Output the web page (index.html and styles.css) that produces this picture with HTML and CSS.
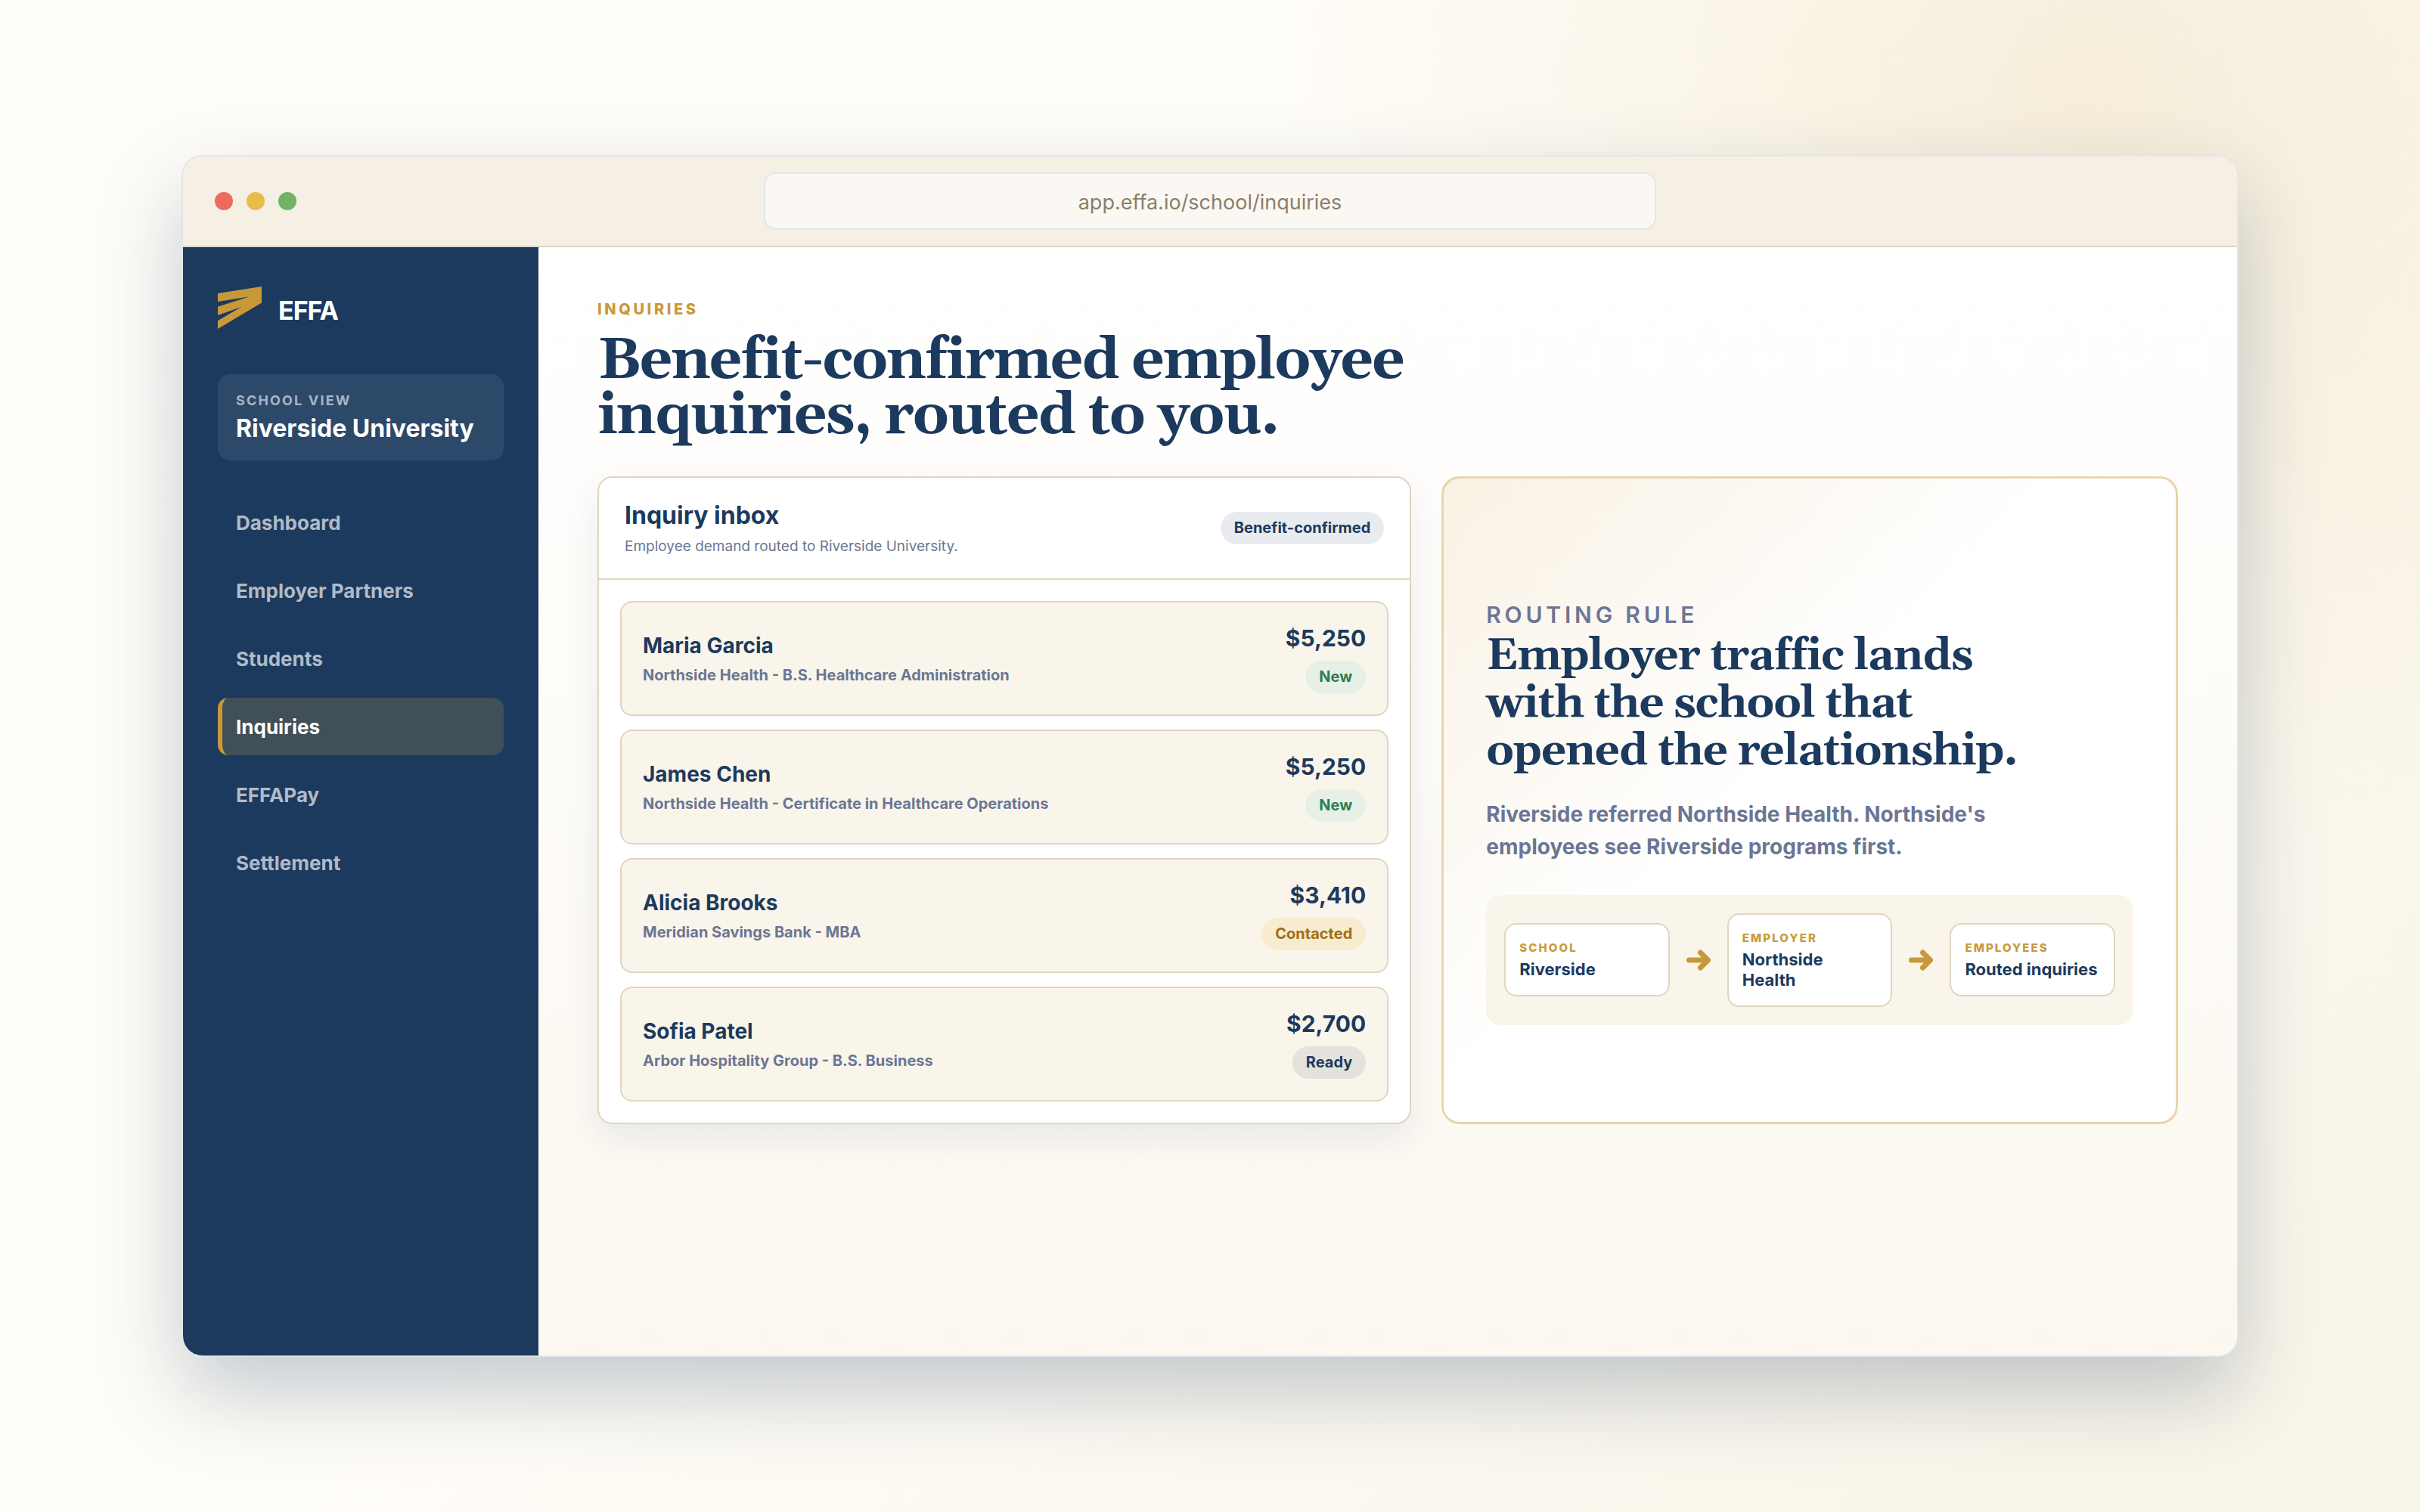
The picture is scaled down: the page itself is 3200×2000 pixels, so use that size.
FILE: index.html
```
<!DOCTYPE html>
<html lang="en">
<head>
<meta charset="utf-8">
<title>EFFA – Inquiries</title>
<link rel="stylesheet" href="styles.css">
</head>
<body>
<div class="window">
  <header class="titlebar">
    <div class="lights"><span class="light light-red"></span><span class="light light-yellow"></span><span class="light light-green"></span></div>
    <input class="address" type="text" aria-label="Address" value="app.effa.io/school/inquiries" readonly>
  </header>
  <div class="app">
    <aside class="sidebar">
      <div class="brand">
        <svg class="brand-mark" viewBox="0 0 58 56" aria-hidden="true"><path d="M0 9L58 0V21.600L0 56V45.300L31 27L0 38V26.700L42 13.300L0 20Z"/></svg>
        <span class="brand-name">EFFA</span>
      </div>
      <div class="account">
        <span class="account-label">SCHOOL VIEW</span>
        <strong class="account-name">Riverside University</strong>
      </div>
      <nav class="nav">
        <a class="nav-item" href="#">Dashboard</a>
        <a class="nav-item" href="#">Employer Partners</a>
        <a class="nav-item" href="#">Students</a>
        <a class="nav-item active" href="#" aria-current="page">Inquiries</a>
        <a class="nav-item" href="#">EFFAPay</a>
        <a class="nav-item" href="#">Settlement</a>
      </nav>
    </aside>
    <main class="main">
      <p class="eyebrow">INQUIRIES</p>
      <h1 class="title">Benefit-confirmed employee<br>inquiries, routed to you.</h1>
      <div class="columns">
        <section class="inbox">
          <header class="inbox-head">
            <div>
              <h2 class="inbox-title">Inquiry inbox</h2>
              <p class="inbox-sub">Employee demand routed to Riverside University.</p>
            </div>
            <span class="pill pill-navy">Benefit-confirmed</span>
          </header>
          <ul class="rows">
            <li class="row">
              <div><h3 class="name">Maria Garcia</h3><p class="detail">Northside Health - B.S. Healthcare Administration</p></div>
              <div class="status"><span class="amount">$5,250</span><span class="pill pill-green">New</span></div>
            </li>
            <li class="row">
              <div><h3 class="name">James Chen</h3><p class="detail">Northside Health - Certificate in Healthcare Operations</p></div>
              <div class="status"><span class="amount">$5,250</span><span class="pill pill-green">New</span></div>
            </li>
            <li class="row">
              <div><h3 class="name">Alicia Brooks</h3><p class="detail">Meridian Savings Bank - MBA</p></div>
              <div class="status"><span class="amount">$3,410</span><span class="pill pill-gold">Contacted</span></div>
            </li>
            <li class="row">
              <div><h3 class="name">Sofia Patel</h3><p class="detail">Arbor Hospitality Group - B.S. Business</p></div>
              <div class="status"><span class="amount">$2,700</span><span class="pill pill-navy">Ready</span></div>
            </li>
          </ul>
        </section>
        <section class="rule">
          <p class="rule-label">ROUTING RULE</p>
          <h2 class="rule-title">Employer traffic lands<br>with the school that<br>opened the relationship.</h2>
          <p class="rule-text">Riverside referred Northside Health. Northside's<br>employees see Riverside programs first.</p>
          <div class="flow">
            <div class="step"><span class="step-label">SCHOOL</span><strong class="step-name">Riverside</strong></div>
            <svg class="arrow" viewBox="0 0 32 28" aria-hidden="true"><path d="M3.500 14H28M18.500 4L28.500 14L18.500 24"/></svg>
            <div class="step"><span class="step-label">EMPLOYER</span><strong class="step-name">Northside Health</strong></div>
            <svg class="arrow" viewBox="0 0 32 28" aria-hidden="true"><path d="M3.500 14H28M18.500 4L28.500 14L18.500 24"/></svg>
            <div class="step"><span class="step-label">EMPLOYEES</span><strong class="step-name">Routed inquiries</strong></div>
          </div>
        </section>
      </div>
    </main>
  </div>
</div>
</body>
</html>
```
FILE: styles.css
```
:root {
  --navy: #1c3a5e;
  --gold: #c8993a;
  --slate: #6b7694;
  --line: #e0d5c1;
  --cream: #faf5ea;
}

* { box-sizing: border-box; }

body {
  margin: 0;
  min-height: 100vh;
  display: flex;
  align-items: center;
  justify-content: center;
  font-family: Inter, "Liberation Sans", sans-serif;
  color: var(--navy);
  background:
    radial-gradient(circle at 86% 6%, rgba(200, 153, 58, 0.14), transparent 32%),
    linear-gradient(135deg, #fffdf9 0%, #fffdf8 45%, #faf5ea 90%);
}

h1, h2, h3, p, ul { margin: 0; padding: 0; }

.window {
  width: 85%;
  min-height: 79.5vh;
  display: flex;
  flex-direction: column;
  overflow: hidden;
  border: 2px solid #e2e6eb;
  border-radius: 28px;
  background: #fff;
  box-shadow: 0 48px 112px rgba(28, 58, 94, 0.26);
}

.titlebar {
  height: 120px;
  display: grid;
  grid-template-columns: 1fr 1180px 1fr;
  align-items: center;
  padding: 0 42px;
  border-bottom: 2px solid var(--line);
  background: #f6efe4;
}

.lights { display: flex; gap: 18px; }
.light { width: 24px; height: 24px; border-radius: 50%; }
.light-red { background: #ee695e; }
.light-yellow { background: #e7bc49; }
.light-green { background: #72b366; }

.address {
  height: 76px;
  padding: 2px 0 0;
  border: 2px solid #e2e6e9;
  border-radius: 16px;
  background: #fbf8f3;
  color: #8a7f6a;
  font: 400 27px/36px Inter, "Liberation Sans", sans-serif;
  text-align: center;
}

.app { flex: 1; display: flex; }

.sidebar {
  width: 470px;
  flex: none;
  padding: 52px 46px;
  background: var(--navy);
  color: #fff;
}

.brand { display: flex; align-items: center; gap: 22px; height: 64px; margin-bottom: 52px; }
.brand-mark { width: 58px; height: 56px; align-self: flex-start; fill: var(--gold); }
.brand-name { font-size: 34px; line-height: 40px; font-weight: 700; letter-spacing: -0.03em; }

.account {
  display: flex;
  flex-direction: column;
  gap: 4px;
  padding: 24px 24px 20px;
  border-radius: 16px;
  background: rgba(255, 255, 255, 0.08);
}
.account-label { font-size: 18px; line-height: 22px; font-weight: 700; letter-spacing: 0.12em; color: rgba(255, 255, 255, 0.6); }
.account-name { font-size: 32px; line-height: 44px; font-weight: 700; white-space: nowrap; }

.nav { display: flex; flex-direction: column; gap: 14px; margin-top: 44px; }
.nav-item {
  padding: 21px 18px 19px;
  border-left: 6px solid transparent;
  border-radius: 14px;
  font-size: 26px;
  line-height: 36px;
  font-weight: 700;
  color: rgba(255, 255, 255, 0.66);
  text-decoration: none;
}
.nav-item.active { border-left-color: var(--gold); background: rgba(200, 153, 58, 0.22); color: #fff; }

.main {
  flex: 1;
  padding: 68px 78px;
  background: linear-gradient(180deg, #fff 0%, #fcf8f0 100%);
}

.eyebrow { font-size: 20px; line-height: 28px; font-weight: 800; letter-spacing: 0.18em; color: var(--gold); }

.title, .rule-title { font-family: Georgia, Gelasio, "Liberation Serif", serif; font-weight: 700; }
.title { margin-top: 18px; font-size: 76px; line-height: 73px; letter-spacing: -0.025em; }

.columns { display: grid; grid-template-columns: 1.05fr 0.95fr; gap: 40px; margin-top: 43px; }

.inbox {
  border: 2px solid var(--line);
  border-radius: 20px;
  background: #fff;
  box-shadow: 0 20px 48px rgba(28, 58, 94, 0.09);
}
.inbox-head {
  display: flex;
  align-items: center;
  justify-content: space-between;
  padding: 28px 34px;
  border-bottom: 2px solid var(--line);
}
.inbox-title { font-size: 32px; line-height: 44px; font-weight: 700; }
.inbox-sub { margin-top: 5px; font-size: 19px; line-height: 28px; color: var(--slate); }

.pill { padding: 8px 18px; border-radius: 22px; font-size: 20px; line-height: 27px; font-weight: 700; }
.pill-navy { background: rgba(28, 58, 94, 0.1); }
.pill-green { background: #e6f0e7; color: #2f7d4f; }
.pill-gold { background: #f7ebd0; color: #a06f14; }

.rows { display: flex; flex-direction: column; gap: 18px; padding: 28px; list-style: none; }
.row {
  min-height: 152px;
  display: flex;
  align-items: center;
  justify-content: space-between;
  padding: 24px 28px;
  border: 2px solid var(--line);
  border-radius: 16px;
  background: var(--cream);
}
.name { font-size: 28px; line-height: 36px; font-weight: 700; }
.detail { margin-top: 7px; font-size: 20px; line-height: 28px; font-weight: 700; color: var(--slate); }
.status { display: flex; flex-direction: column; align-items: flex-end; gap: 11px; }
.amount { font-size: 30px; line-height: 38px; font-weight: 700; }

.rule {
  display: flex;
  flex-direction: column;
  justify-content: center;
  padding: 56px;
  border: 3px solid #e8d5ab;
  border-radius: 24px;
  background: linear-gradient(135deg, #f9f1e3 0%, #fff 45%);
}
.rule-label { padding-top: 28px; font-size: 30px; line-height: 47px; font-weight: 600; letter-spacing: 0.16em; color: var(--slate); }
.rule-title { font-size: 58px; line-height: 63px; letter-spacing: -0.02em; }
.rule-text { margin-top: 30px; font-size: 28px; line-height: 43px; font-weight: 700; color: var(--slate); }

.flow {
  display: grid;
  grid-template-columns: 1fr 32px 1fr 32px 1fr;
  align-items: center;
  gap: 22px;
  margin-top: 42px;
  padding: 24px;
  border-radius: 20px;
  background: var(--cream);
}
.step {
  display: flex;
  flex-direction: column;
  gap: 4px;
  padding: 20px 18px;
  border: 2px solid var(--line);
  border-radius: 16px;
  background: #fff;
}
.step-label { font-size: 15px; line-height: 22px; font-weight: 800; letter-spacing: 0.14em; color: var(--gold); }
.step-name { font-size: 22px; line-height: 27px; font-weight: 700; }
.arrow { width: 32px; height: 28px; fill: none; stroke: var(--gold); stroke-width: 7; stroke-linecap: round; stroke-linejoin: round; }
```
